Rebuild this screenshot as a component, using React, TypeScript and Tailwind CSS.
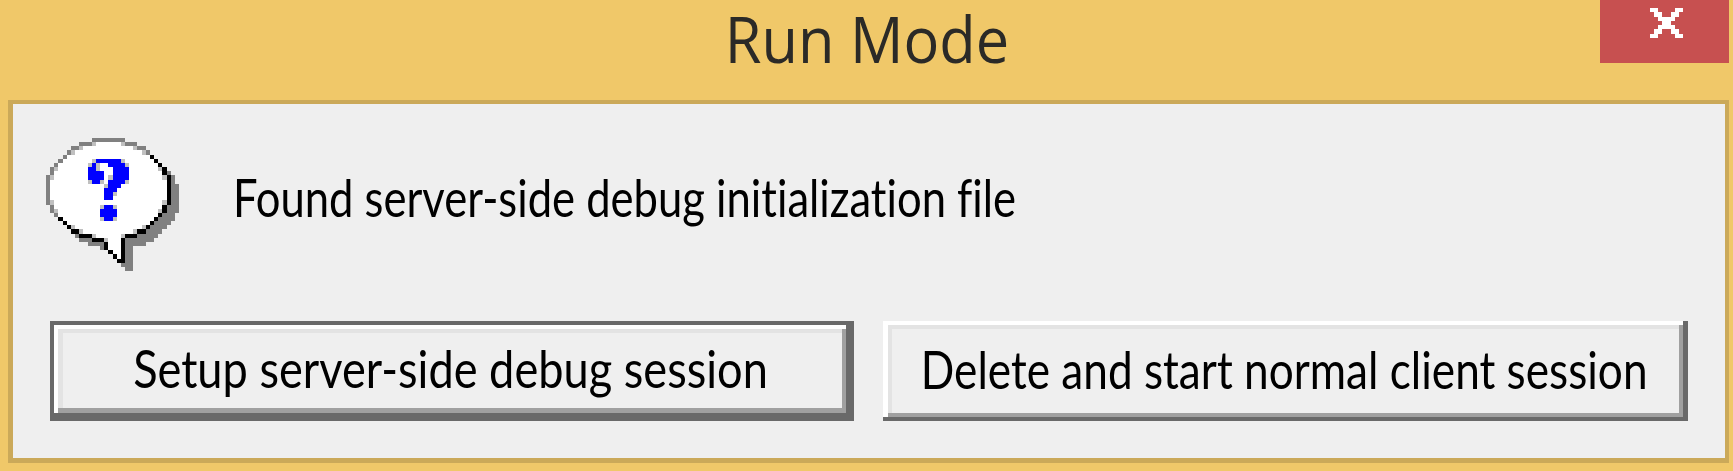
import React from "react";

type Span = [row: number, col: number, width: number];

const toPath = (spans: Span[]) =>
  spans.map(([y, x, w]) => `M${x} ${y}h${w}v1h${-w}z`).join("");

const WHITE: Span[] = [
  [1, 11, 8], [2, 8, 14], [3, 6, 18], [4, 5, 20], [5, 4, 22], [6, 3, 24], [7, 2, 26], [8, 2, 26],
  [9, 1, 28], [10, 1, 28], [11, 1, 28], [12, 1, 28], [13, 1, 28], [14, 1, 28], [15, 1, 28],
  [16, 2, 26], [17, 2, 26], [18, 3, 24], [19, 4, 22], [20, 5, 20], [21, 6, 18], [22, 8, 14],
  [23, 11, 8], [24, 14, 4], [25, 15, 3], [26, 15, 3], [27, 16, 2], [28, 17, 1],
];
const GRAY: Span[] = [
  [0, 11, 8], [1, 8, 3], [1, 19, 3], [2, 6, 2], [2, 22, 2], [3, 5, 1], [3, 24, 1], [4, 4, 1],
  [5, 3, 1], [6, 2, 1], [7, 1, 1], [8, 1, 1], [8, 29, 1], [9, 0, 1], [10, 0, 1], [11, 0, 1],
  [12, 0, 1], [13, 0, 1], [14, 0, 1], [15, 0, 1], [9, 30, 1], [10, 30, 1], [11, 30, 2],
  [12, 30, 2], [13, 30, 2], [14, 30, 2], [15, 30, 2], [16, 29, 3], [17, 29, 3], [16, 1, 1],
  [17, 1, 1], [18, 2, 1], [18, 28, 3], [19, 27, 4], [20, 26, 4], [21, 25, 4], [22, 24, 4],
  [23, 22, 5], [24, 19, 7], [25, 19, 5], [26, 19, 2], [27, 19, 2], [28, 19, 2], [29, 19, 2],
  [30, 18, 3], [31, 19, 2], [23, 7, 1], [24, 8, 3], [25, 10, 4], [26, 13, 1],
];
const BLACK: Span[] = [
  [4, 25, 1], [5, 26, 1], [6, 27, 1], [7, 28, 1], [8, 28, 1], [9, 29, 1], [10, 29, 1],
  [11, 29, 1], [12, 29, 1], [13, 29, 1], [14, 29, 1], [15, 29, 1], [16, 28, 1], [17, 28, 1],
  [18, 27, 1], [19, 26, 1], [20, 25, 1], [21, 24, 1], [22, 22, 2], [23, 19, 3], [24, 18, 1],
  [25, 18, 1], [26, 18, 1], [27, 18, 1], [28, 18, 1], [29, 17, 2], [28, 16, 1], [27, 15, 1],
  [26, 14, 1], [25, 14, 1], [24, 11, 3], [23, 8, 3], [22, 6, 2], [21, 5, 1], [20, 4, 1], [19, 3, 1],
];
const LIGHT: Span[] = [
  [1, 11, 1], [1, 18, 1], [2, 8, 1], [2, 21, 1], [3, 6, 1], [3, 23, 1], [7, 2, 1], [7, 27, 1],
  [9, 1, 1], [9, 28, 1], [15, 1, 1], [15, 28, 1], [17, 2, 1], [17, 27, 1], [21, 6, 1], [21, 23, 1],
  [22, 8, 1], [22, 21, 1], [23, 11, 1], [23, 18, 1], [24, 14, 1],
  [5, 11, 1], [5, 18, 1], [6, 10, 1], [6, 12, 1], [6, 19, 1], [7, 12, 1], [9, 15, 1], [10, 10, 1],
  [10, 13, 1], [10, 19, 1], [11, 14, 1], [13, 16, 1], [16, 13, 1], [16, 16, 1], [19, 13, 1], [19, 16, 1],
];
const BLUE: Span[] = [
  [5, 12, 6], [6, 11, 1], [6, 15, 4], [7, 10, 2], [7, 16, 4], [8, 10, 4], [8, 16, 4], [9, 10, 4],
  [9, 16, 4], [10, 11, 2], [10, 15, 4], [11, 15, 3], [12, 14, 3], [13, 14, 2], [14, 14, 2],
  [16, 14, 2], [17, 13, 4], [18, 13, 4], [19, 14, 2],
];
const CROSS: Span[] = [
  [0, 0, 2], [0, 6, 2], [1, 1, 2], [1, 5, 2], [2, 2, 4], [3, 3, 2], [4, 2, 4],
  [5, 1, 2], [5, 5, 2], [6, 0, 2], [6, 6, 2],
];

function QuestionBalloon() {
  return (
    <svg className="h-[133px] w-[133px] shrink-0" viewBox="0 0 32 32" shapeRendering="crispEdges">
      <path d={toPath(WHITE)} fill="#ffffff" />
      <path d={toPath(GRAY)} fill="#808080" />
      <path d={toPath(BLACK)} fill="#000000" />
      <path d={toPath(LIGHT)} fill="#c0c0c0" />
      <path d={toPath(BLUE)} fill="#0000ff" />
    </svg>
  );
}

export default function App() {
  return (
    <div className="flex h-[471px] w-[1733px] flex-col overflow-hidden bg-[#f0c869] font-['Lato',sans-serif] [font-variant-ligatures:none]">
      <header className="grid h-[100px] shrink-0 grid-cols-[1fr_auto_1fr] pr-1">
        <span />
        <h1 className="h-[83px] origin-center translate-x-[2px] -translate-y-px scale-x-[0.93] whitespace-nowrap font-['Open_Sans',sans-serif] text-[64px] leading-[80px] text-[#2b2a27]">
          Run Mode
        </h1>
        <button
          aria-label="Close"
          className="flex h-[63px] w-[129px] justify-center justify-self-end bg-[#c75050] pt-2 pl-[3px]"
        >
          <svg className="h-[30px] w-[33px]" viewBox="0 0 8 7" preserveAspectRatio="none" shapeRendering="crispEdges">
            <path d={toPath(CROSS)} fill="#ffffff" />
          </svg>
        </button>
      </header>

      <main className="mr-1 ml-2 flex h-[363px] shrink-0 flex-col border-t-4 border-r-4 border-b-[5px] border-l-[5px] border-[#cba959] bg-[#efefef]">
        <div className="flex h-[217px] shrink-0 pt-[34px] pl-[33px]">
          <QuestionBalloon />
          <p className="ml-[54px] h-[72px] origin-left scale-x-[0.822] whitespace-nowrap pt-[23px] text-[53px] leading-[72px] text-black">
            Found server-side debug initialization file
          </p>
        </div>

        <div className="flex gap-[29px] pl-[37px]">
          <button className="h-[100px] w-[804px] border-t-4 border-r-8 border-b-8 border-l-4 border-[#696969]">
            <span className="block h-full border-t-4 border-l-4 border-white">
              <span className="block h-full border-r-4 border-b-[5px] border-[#a0a0a0]">
                <span className="flex h-full items-center justify-center border-t-4 border-l-[5px] border-[#e3e3e3] pr-1 pb-[5px]">
                  <span className="scale-x-[0.852] whitespace-nowrap text-[53px] leading-[70px] text-black">
                    Setup server-side debug session
                  </span>
                </span>
              </span>
            </span>
          </button>
          <button className="h-[100px] w-[805px] border-r-[5px] border-b-4 border-[#696969]">
            <span className="block h-full border-t-4 border-l-[5px] border-white">
              <span className="block h-full border-r-4 border-b-4 border-[#a0a0a0]">
                <span className="flex h-full items-center justify-center border-t-4 border-l-4 border-[#e3e3e3] pr-[3px] pb-[5px]">
                  <span className="scale-x-[0.833] whitespace-nowrap text-[53px] leading-[70px] text-black">
                    Delete and start normal client session
                  </span>
                </span>
              </span>
            </span>
          </button>
        </div>
      </main>
    </div>
  );
}
